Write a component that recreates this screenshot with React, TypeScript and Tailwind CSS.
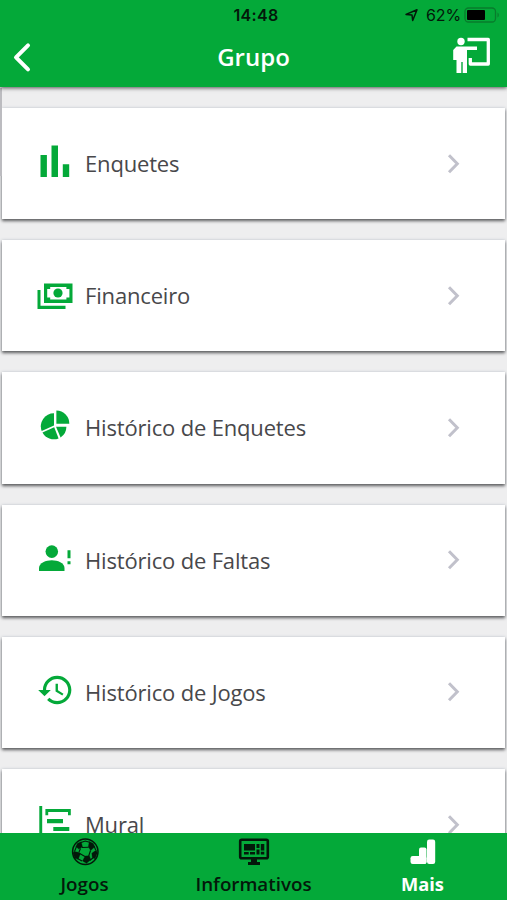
import type { ReactNode } from 'react'

interface MenuItem {
  label: string
  icon: ReactNode
}

const menuItems: MenuItem[] = [
  {
    label: 'Enquetes',
    icon: <path d="M4.5 12h6.4v22H4.5zM15.5 2.4H22V34h-6.5zM26.8 21.3h6.4V34h-6.4z" />,
  },
  {
    label: 'Financeiro',
    icon: (
      <>
        <path d="M1.5 15h3v15.8h25V34h-28z" />
        <path
          fillRule="evenodd"
          d="M8 8.5h28.5V28H8zM14.2 12v2h-3v8.5h3v2h16.2v-2h3V14h-3v-2z"
        />
        <circle cx="22" cy="18" r="4.6" />
      </>
    ),
  },
  {
    label: 'Histórico de Enquetes',
    icon: (
      <>
        <path d="M20.4 3.5A13 13 0 0 1 33.3 16.8H20.4z" />
        <path d="M18 6.3V18.6L5.7 24A13 13 0 0 1 18 6.3z" />
        <path d="M6.5 25.4L18.2 20.3L22.6 31.5A13 13 0 0 1 6.5 25.4z" />
        <path d="M20 19.8H30.4A13 13 0 0 1 24.6 30.5z" />
      </>
    ),
  },
  {
    label: 'Histórico de Faltas',
    icon: (
      <>
        <circle cx="15.8" cy="11.6" r="6.3" />
        <path d="M3 31V28C3 23 10 20.3 15.8 20.3S28.5 23 28.5 28V31z" />
        <path d="M31.5 10.3h3v8h-3zM31.5 21.2h3v3h-3z" />
      </>
    ),
  },
  {
    label: 'Histórico de Jogos',
    icon: (
      <path
        transform="translate(.6 -1) scale(1.58)"
        d="M13 3c-4.97 0-9 4.03-9 9H1l3.89 3.89.07.14L9 12H6c0-3.87 3.13-7 7-7s7 3.13 7 7-3.13 7-7 7c-1.93 0-3.68-.79-4.94-2.06l-1.42 1.42C8.27 19.99 10.51 21 13 21c4.97 0 9-4.03 9-9s-4.03-9-9-9zm-1 5v5l4.28 2.54.72-1.21-3.5-2.08V8H12z"
      />
    ),
  },
  {
    label: 'Mural',
    icon: <path d="M3.3 2h2.9v36H3.3zM9.4 5h25.4v6.3H32V8H12.2v3.3H9.4zM11 15h16v4.2H11zM17.3 23h16v4h-16z" />,
  },
]

function StatusBar() {
  return (
    <div className="grid h-[30px] grid-cols-3 items-center font-[Inter,sans-serif] text-[#03180a]">
      <span />
      <span className="pl-[5px] text-center text-[16px] font-semibold tracking-[0.3px]">14:48</span>
      <div className="flex items-center justify-end pr-[7px]">
        <svg className="mr-2 h-[14px] w-[14px]" viewBox="0 0 14 14" fill="none" stroke="currentColor" strokeWidth="1.5" strokeLinejoin="round">
          <path d="M2 6.4L13 1.7L8.7 12.5L8 7z" />
        </svg>
        <span className="mr-[3px] text-[16px] tracking-[-0.1px]">62%</span>
        <svg className="h-4 w-9" viewBox="0 0 36 16">
          <rect x="1" y="1" width="30.5" height="14" rx="3.5" fill="none" stroke="#087c2c" strokeWidth="1.3" />
          <rect x="3" y="3" width="18" height="10" rx="1" fill="#000" />
          <path d="M33.5 5.5a3 3 0 0 1 0 5z" fill="#087c2c" />
        </svg>
      </div>
    </div>
  )
}

function Header() {
  return (
    <header className="relative z-10 h-[87px] shrink-0 bg-[#04a939] shadow-[0_1px_4px_rgba(0,0,0,0.65)]">
      <StatusBar />
      <div className="grid h-[54px] grid-cols-[60px_1fr_60px] items-center">
        <svg className="ml-3 h-8 w-5" viewBox="0 0 20 32" fill="none" stroke="#fff" strokeWidth="4" strokeLinecap="round" strokeLinejoin="round">
          <path d="M16 4.3L4 16.3L16 28.3" />
        </svg>
        <h1 className="text-center text-[24px] font-semibold text-white">Grupo</h1>
        <svg className="-mt-1 ml-[5px] h-10 w-10" viewBox="0 0 40 40" fill="#fff">
          <circle cx="9" cy="6.5" r="3.7" />
          <path d="M4.5 11.5H25V15H15V38H10.7V27H9.3V38H4.5V25H1.2V15z" />
          <path d="M15.5 4.5H36.3V29H18.3V23" fill="none" stroke="#fff" strokeWidth="3.3" strokeLinejoin="round" />
        </svg>
      </div>
    </header>
  )
}

function MenuCard({ label, icon }: MenuItem) {
  return (
    <li className="flex h-[111.2px] shrink-0 items-center bg-white pr-[44px] pl-[34px] shadow-[0_2px_3px_rgba(0,0,0,0.6),0_0_3px_rgba(120,140,170,0.25)]">
      <svg className="h-[41px] w-[41px]" viewBox="0 0 41 41" fill="#04a939">
        {icon}
      </svg>
      <span className="ml-2 flex-1 text-[22px] tracking-[-0.17px] text-[#48484b]">{label}</span>
      <svg className="h-5 w-[14px]" viewBox="0 0 14 20" fill="none" stroke="#c1c1cb" strokeWidth="3">
        <path d="M2 1.2L10.3 9.7L2 18.2" />
      </svg>
    </li>
  )
}

function BallIcon() {
  return (
    <svg className="h-7 w-7" viewBox="0 0 28 28" fill="#03180a" stroke="#03180a">
      <circle cx="14.3" cy="13.7" r="12.7" fill="none" strokeWidth="1.5" />
      {/* seams */}
      <path
        d="M11 9.5L17.7 9.2M19.5 12.5L17.7 18M14 18.5L8.7 15.5M8 14L9.5 10.5M10 4.5L14.3 3L18.5 4.3M23 8L24.7 12M22.5 19.500L18.700 22.500M11 23L6.500 20.500M3.500 13.500L5.500 8.500"
        fill="none"
        strokeWidth="1.1"
      />
      <path
        d="M6.500 5.300L10.200 3.800L11.500 9L7.800 11L4.800 8.500zM18.300 3.500L22.300 5.500L23.700 8.800L19.700 12.500L17.300 8.800zM25.300 12L26.300 15L24 20.800L21.300 19.500L20.800 15.300zM14.200 18L18.300 17.700L19.800 21.700L15.500 25.300L11.500 23zM3 13.500L8.500 14.500L9.300 16L7.200 21.300L3.800 20.300L2 15z"
        strokeWidth="0.3"
      />
    </svg>
  )
}

function MonitorIcon() {
  return (
    <svg className="h-7 w-8" viewBox="0 0 32 28" fill="#03180a">
      <rect x="2.2" y="1.8" width="27.6" height="18.4" rx="1.5" fill="none" stroke="#03180a" strokeWidth="2.6" />
      <path d="M6 6h11v6.5H6zM18.5 6h3v4h-3zM22.8 6h3.5v6.5h-3.5zM18.5 11.4h3v5.2h-3zM22.800 13.800h3.500v2.800h-3.500zM6 14h4.700v2.600H6zM12 14h5v2.600h-5z" />
      <path d="M13 20h6v4h3v3H10v-3h3z" />
    </svg>
  )
}

function StairsIcon() {
  return (
    <svg className="h-7 w-7" viewBox="0 0 28 28" fill="#fff">
      <rect x="1.500" y="18" width="16" height="8" rx="2.200" />
      <rect x="10" y="9.500" width="7.500" height="16.500" rx="2" />
      <rect x="18" y="1.500" width="8.200" height="24.500" rx="2.200" />
    </svg>
  )
}

const tabs = [
  { label: 'Jogos', icon: <BallIcon />, active: false },
  { label: 'Informativos', icon: <MonitorIcon />, active: false },
  { label: 'Mais', icon: <StairsIcon />, active: true },
]

function TabBar() {
  return (
    <nav className="relative z-10 grid h-[67.5px] shrink-0 grid-cols-3 bg-[#04a939]">
      {tabs.map((t) => (
        <a key={t.label} className="flex flex-col items-center pt-[5px]">
          {t.icon}
          <span
            className={`mt-1 leading-7 ${
              t.active ? 'text-[18.3px] font-bold text-white' : 'text-[18.8px] font-semibold text-[#03180a]'
            }`}
          >
            {t.label}
          </span>
        </a>
      ))}
    </nav>
  )
}

export default function App() {
  return (
    <div className="relative flex h-[900px] w-[507px] flex-col overflow-hidden bg-[#eeeeef] font-['Open_Sans','Noto_Sans',sans-serif]">
      <Header />
      <main className="min-h-0 flex-1 overflow-hidden">
        <ul className="flex flex-col gap-[21px] px-[2px] pt-[21px]">
          {menuItems.map((item) => (
            <MenuCard key={item.label} {...item} />
          ))}
        </ul>
      </main>
      <TabBar />
      {/* edge of the side drawer */}
      <div className="absolute top-[88px] left-0 h-[88px] w-[2px] bg-[#bcbcc0]" />
    </div>
  )
}
